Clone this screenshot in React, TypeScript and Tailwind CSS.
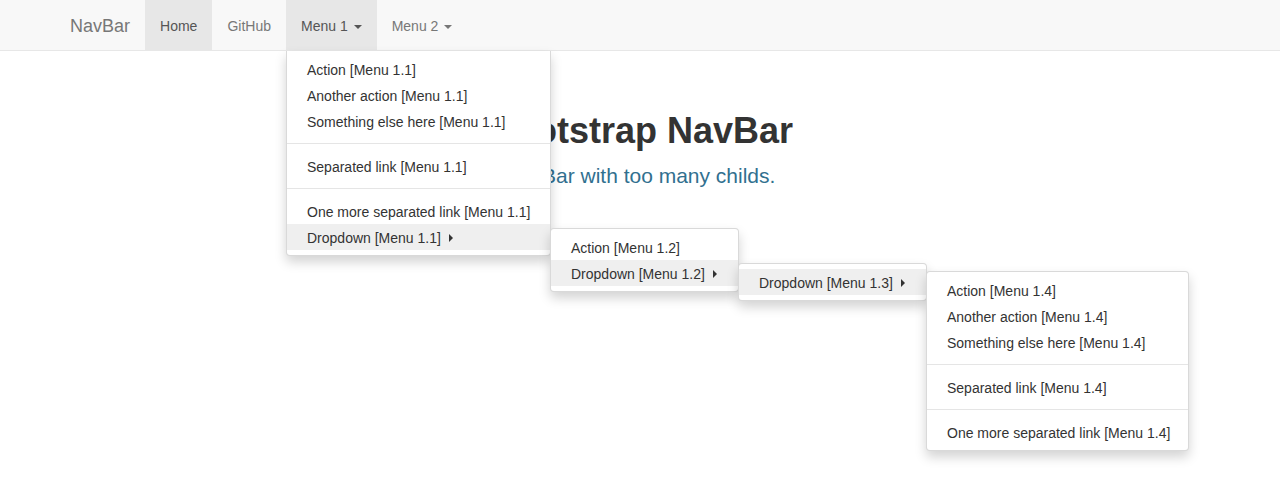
import React from "react";

type Item = { label?: string; divider?: boolean; sub?: boolean; active?: boolean };

function Caret() {
  return (
    <span className="inline-block ml-[6px] align-middle w-0 h-0 border-t-[4px] border-t-current border-x-[4px] border-x-transparent" />
  );
}

function RightCaret() {
  return (
    <span className="inline-block ml-[8px] align-middle w-0 h-0 border-l-[4px] border-l-[#333] border-y-[4px] border-y-transparent relative top-[-1px]" />
  );
}

function Menu({ items, className }: { items: Item[]; className: string }) {
  return (
    <ul
      className={
        "absolute bg-white border border-[rgba(0,0,0,0.15)] py-[5px] shadow-[0_6px_12px_rgba(0,0,0,0.175)] text-[14px] leading-[20px] text-[#333] " +
        className
      }
    >
      {items.map((it, i) =>
        it.divider ? (
          <li key={i} className="h-px my-[9px] bg-[#e5e5e5]" />
        ) : (
          <li
            key={i}
            className={"px-[20px] pt-[4px] pb-[2px] whitespace-nowrap " + (it.active ? "bg-[#efefef]" : "")}
          >
            {it.label}
            {it.sub && <RightCaret />}
          </li>
        )
      )}
    </ul>
  );
}

export default function App() {
  const m11: Item[] = [
    { label: "Action [Menu 1.1]" },
    { label: "Another action [Menu 1.1]" },
    { label: "Something else here [Menu 1.1]" },
    { divider: true },
    { label: "Separated link [Menu 1.1]" },
    { divider: true },
    { label: "One more separated link [Menu 1.1]" },
    { label: "Dropdown [Menu 1.1]", sub: true, active: true },
  ];
  const m12: Item[] = [
    { label: "Action [Menu 1.2]" },
    { label: "Dropdown [Menu 1.2]", sub: true, active: true },
  ];
  const m13: Item[] = [{ label: "Dropdown [Menu 1.3]", sub: true, active: true }];
  const m14: Item[] = [
    { label: "Action [Menu 1.4]" },
    { label: "Another action [Menu 1.4]" },
    { label: "Something else here [Menu 1.4]" },
    { divider: true },
    { label: "Separated link [Menu 1.4]" },
    { divider: true },
    { label: "One more separated link [Menu 1.4]" },
  ];
  return (
    <div className="relative h-[481px] bg-white overflow-hidden font-['Liberation_Sans',Arial,sans-serif]">
      <nav className="h-[51px] bg-[#f8f8f8] border-b border-[#e7e7e7]">
        <div className="w-[1170px] mx-auto flex h-[50px] text-[14px] text-[#777]">
          <div className="px-[15px] pt-[15px] text-[18px] leading-[22px] text-[#777]">NavBar</div>
          <div className="px-[15px] pt-[16px] leading-[20px] bg-[#e7e7e7] text-[#555]">Home</div>
          <div className="px-[15px] pt-[16px] leading-[20px]">GitHub</div>
          <div className="px-[15px] pt-[16px] leading-[20px] bg-[#e7e7e7] text-[#555]">
            Menu 1<Caret />
          </div>
          <div className="px-[15px] pt-[16px] leading-[20px]">
            Menu 2<Caret />
          </div>
        </div>
      </nav>
      <div className="text-center pt-[60px]">
        <h1 className="text-[36px] leading-[40px] font-bold text-[#333]">Bootstrap NavBar</h1>
        <p className="mt-[10px] text-[21px] leading-[30px] text-[#31708f]">
          NavBar with too many childs.
        </p>
      </div>
      <Menu items={m11} className="left-[286px] top-[51px] w-[265px] border-t-0 rounded-b-[4px]" />
      <Menu items={m12} className="left-[550px] top-[228px] w-[189px] rounded-[4px]" />
      <Menu items={m13} className="left-[738px] top-[263px] w-[189px] rounded-[4px]" />
      <Menu items={m14} className="left-[926px] top-[271px] w-[263px] rounded-[4px]" />
    </div>
  );
}
